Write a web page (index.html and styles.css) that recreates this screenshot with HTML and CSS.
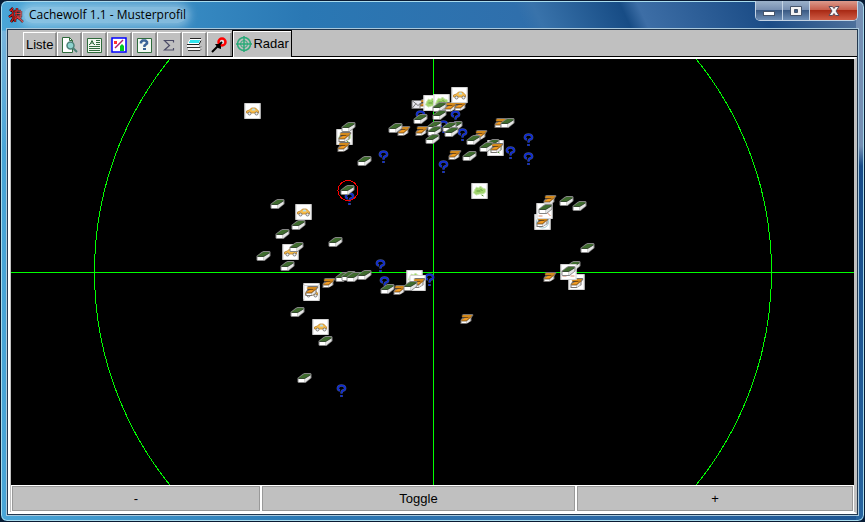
FILE: index.html
```html
<!DOCTYPE html>
<html lang="de">
<head>
<meta charset="utf-8">
<title>Cachewolf 1.1 - Musterprofil</title>
<link rel="stylesheet" href="styles.css">
</head>
<body>
<div class="window">
  <header class="titlebar">
    <svg class="app-icon" viewBox="0 0 16 16" aria-hidden="true">
      <g fill="none" stroke="#111" stroke-width="2.500"><path d="M5 1 2 4M3 2 5 5 5 12 3 15M5 7 1 10M6 4h7M9 1v3M8 4v5h5V4M7 6.500h6M7 9v6M7 12l3-2 5 5M13 10l-3 2"/></g>
      <g fill="none" stroke="#e51c1c" stroke-width="1.200"><path d="M5 1 2 4M3 2 5 5 5 12 3 15M5 7 1 10M6 4h7M9 1v3M8 4v5h5V4M7 6.500h6M7 9v6M7 12l3-2 5 5M13 10l-3 2"/></g>
    </svg>
    <h1 class="title">Cachewolf 1.1 - Musterprofil</h1>
    <div class="controls">
      <button class="control" aria-label="Minimieren"><svg viewBox="0 0 16 14"><rect x="2.500" y="7.500" width="11" height="4" fill="#fff" stroke="#46556b"/></svg></button>
      <button class="control" aria-label="Maximieren"><svg viewBox="0 0 16 14"><path d="M2.500 2.500h11v9h-11zM6.500 5.500v3h3v-3z" fill="#f4f4f4" fill-rule="evenodd" stroke="#46556b"/></svg></button>
      <button class="control close" aria-label="Schließen"><svg viewBox="0 0 16 14"><path d="M3 2.500h3.500L8 4.500l1.500-2H13L10 7l3 4.500H9.500L8 9.500l-1.500 2H3L6 7z" fill="#f6f6f6" stroke="#5a4a58"/></svg></button>
    </div>
  </header>
  <main class="panel">
    <nav class="tabs">
      <button class="tab text-tab">Liste</button>
      <button class="tab" aria-label="Details"><svg viewBox="0 0 18 18"><path d="M2.500 1.500h7l3 3v12h-10z" fill="#fff" stroke="#2f6b3c"/><path d="M9.500 1.500v3h3" fill="none" stroke="#2f6b3c"/><circle cx="10.500" cy="9.500" r="3.500" fill="#8ed3cf" stroke="#4c8178" stroke-width="1.500"/><path d="m13 12 4 4" stroke="#4c8178" stroke-width="2"/></svg></button>
      <button class="tab" aria-label="Beschreibung"><svg viewBox="0 0 18 18"><path d="M2.500 2.500h14v14h-14z" fill="#f2f8f0" stroke="#2f6b3c"/><path d="M4 8.500h1l2-4 2 4h1M6 7h2M11 4.500h4M11 6.500h4M11 8.500h4M4 10.500h11M4 12.500h11M4 14.500h11" fill="none" stroke="#2f6b3c"/></svg></button>
      <button class="tab" aria-label="Bilder"><svg viewBox="0 0 18 18"><path d="M2 2h14v14H2z" fill="#fff" stroke="#00f" stroke-width="1.500"/><path d="m5 12 8-8" stroke="#b22070" stroke-width="1.500"/><path d="M4 5h3v3H4z" fill="#f33"/><path d="M10 15v-5l2-2 2 2v5z" fill="#0c2"/></svg></button>
      <button class="tab" aria-label="Hinweise"><svg viewBox="0 0 18 18"><path d="M2.500 2.500h14v14h-14z" fill="#f4faf4" stroke="#2f6b3c"/><path d="M6 7.500V6l1.500-1.500h3L12 6v1.500L9.500 9.500V11" fill="none" stroke="#3c6698" stroke-width="2.500"/><path d="M8 12h3v2H8z" fill="#3c6698"/></svg></button>
      <button class="tab" aria-label="Solver"><svg viewBox="0 0 18 18"><path d="M13.500 6.500v-2h-9l5 5-5 4.500h9v-2" fill="none" stroke="#4c4c67" stroke-width="1.200"/></svg></button>
      <button class="tab" aria-label="Rechner"><svg viewBox="0 0 18 18"><path d="M5 3.500h11l-2 4H3z" fill="#2ee4ed" stroke="#fff"/><path d="M5 2.500h11M2 8.500h12l2-4" fill="none" stroke="#222"/><path d="M2 9h12v2H2zM3 12h12v2H3z" fill="#f6f6f6"/><path d="M2 11.500h13l1-1M3 14.500h12l1-1" fill="none" stroke="#333"/></svg></button>
      <button class="tab" aria-label="Ziel"><svg viewBox="0 0 18 18"><circle cx="12" cy="6" r="3.500" fill="#ddd" stroke="#f00" stroke-width="2.500"/><path d="m2 16 10-10" stroke="#000" stroke-width="2"/><path d="M5 8h4l2 2v3l-3-1z"/></svg></button>
      <button class="tab text-tab active"><svg viewBox="0 0 18 18"><g fill="none" stroke="#2aaa78" stroke-width="1.500"><circle cx="9" cy="9" r="6.500"/><circle cx="9" cy="9" r="3.500" stroke-width="1"/><path d="M9 1v16M1 9h16"/></g></svg><span>Radar</span></button>
    </nav>
    <section class="view">
      <svg class="radar" viewBox="11 59 844 426" preserveAspectRatio="xMidYMid slice" role="img" aria-label="Radar">
        <defs>
          <g id="t"><path d="M-7 0-2-4l2-1h6l1 1v4L1 5H-6l-1-1z" fill="#858585"/><path d="M-6 0-1-3.500l1-.5h5l1 1L0 .5z" fill="#3f6c2e"/><path d="M-6 1h6v3h-6z" fill="#fff"/><path d="M0 1 6-3v3L1 4H0z" fill="#e4e4e4"/><path d="M-6 .5h6L6-3" fill="none" stroke="#263c1f" stroke-width=".8"/></g>
          <g id="m"><path d="M-5-4-3-5H6l1 1-2 3v3L0 5h-6V1l3-4z" fill="#777370"/><path d="m-5-3 2-1h9l-2 2h-8z" fill="#d48a1c"/><path d="M-5 1 0-2h5L1 2h-6z" fill="#f09a22"/><path d="M-5 2h5v2h-5z" fill="#fff"/><path d="m0 2 4-3v3L1 4H0z" fill="#e4e4e4"/><path d="M-4-1.500h6M-5 2h5l4-4" fill="none" stroke="#4b2e0b" stroke-width=".7"/></g>
          <g id="q" fill="none"><path d="M-1.500-.5C-5-1-4-5.500 0-5.500s5 4.500 1.500 5Q0 0 0 2.500M0 4v2" stroke="#4a5878" stroke-width="2.500"/><path d="M-1.500-.5C-5-1-4-5.500 0-5.500s5 4.500 1.500 5Q0 0 0 2.500M0 4v2" stroke="#0a28d8" stroke-width="1.500"/></g>
          <g id="b"><path d="M-8-8H8V8H-8z" fill="#fff"/><path d="M-7.500-7.500h15v15h-15z" fill="none" stroke="#d4d4d4"/></g>
          <g id="c"><use href="#b"/><path d="M-6 2v-2l3-1 2-2h4l2 2 1 1v2z" fill="#f8bc48" stroke="#b9802c" stroke-width=".8"/><path d="m-1 -.5 1-2h2l1 2z" fill="#b4e0f2"/><circle cx="-3" cy="2.500" r="1.500" fill="#eee" stroke="#666" stroke-width=".8"/><circle cx="4" cy="2.500" r="1.500" fill="#eee" stroke="#666" stroke-width=".8"/></g>
          <g id="w"><use href="#b"/><path d="m-5-1 2-3 2 1 2-2 2 2 3 1v3L4 3H0l-3 1-3-2z" fill="#a0d46c" stroke="#c8e6ae"/><path d="M-3 0h4M1-2l2 2M2 4l2 1" stroke="#5c983a"/></g>
        </defs>
        <g class="lines">
          <circle cx="433.500" cy="272" r="338.500"/>
          <path d="M433.500-400v1400M-1000 272.500h3000"/>
        </g>
        <g>
          <g fill="#e8e8ee" stroke="#777"><path d="M412.500 100.500h12v8h-12z"/><path d="m412.500 100.500 6 5 6-5M412.500 108.500l4-5M424.500 108.500l-4-5" fill="none"/></g>
          <use href="#m" x="426" y="104"/>
          <use href="#q" x="421" y="117"/><use href="#q" x="456" y="117"/><use href="#q" x="444" y="127"/><use href="#q" x="463" y="135"/>
          <use href="#q" x="529" y="140"/><use href="#q" x="529" y="159"/><use href="#q" x="511" y="153"/><use href="#q" x="444" y="167"/>
          <use href="#q" x="384" y="157"/><use href="#q" x="350" y="199"/><use href="#q" x="381" y="266"/><use href="#q" x="385" y="283"/>
          <use href="#q" x="430" y="280"/><use href="#q" x="342" y="391"/>
          <use href="#c" x="253" y="111"/><use href="#c" x="304" y="212"/><use href="#c" x="291" y="252"/><use href="#c" x="321" y="327"/>
          <use href="#w" x="312" y="291"/><use href="#c" x="312" y="293"/>
          <use href="#w" x="432" y="103"/><use href="#w" x="442" y="102"/><use href="#w" x="480" y="191"/><use href="#w" x="496" y="148"/>
          <use href="#w" x="345" y="137"/><use href="#w" x="415" y="278"/><use href="#b" x="418" y="283"/>
          <use href="#m" x="451" y="107"/><use href="#m" x="461" y="106"/><use href="#c" x="460" y="95"/>
          <use href="#m" x="404" y="131"/><use href="#m" x="422" y="131"/><use href="#m" x="481" y="135"/><use href="#m" x="501" y="123"/>
          <use href="#m" x="455" y="155"/><use href="#m" x="345" y="137"/><use href="#m" x="344" y="147"/>
          <use href="#m" x="329" y="283"/><use href="#m" x="312" y="291"/><use href="#m" x="400" y="290"/><use href="#m" x="419" y="283"/>
          <use href="#m" x="467" y="319"/><use href="#m" x="550" y="200"/><use href="#m" x="550" y="277"/>
          <use href="#t" x="349" y="127"/><use href="#t" x="365" y="161"/><use href="#t" x="348" y="190"/><use href="#t" x="278" y="204"/>
          <use href="#t" x="299" y="225"/><use href="#t" x="283" y="234"/><use href="#t" x="297" y="247"/><use href="#t" x="264" y="256"/>
          <use href="#t" x="288" y="266"/><use href="#t" x="336" y="242"/><use href="#t" x="343" y="277"/><use href="#t" x="349" y="276"/>
          <use href="#t" x="354" y="277"/><use href="#t" x="365" y="275"/><use href="#t" x="388" y="289"/><use href="#t" x="298" y="312"/>
          <use href="#t" x="326" y="341"/><use href="#t" x="305" y="378"/><use href="#t" x="396" y="128"/><use href="#t" x="421" y="119"/>
          <use href="#t" x="440" y="107"/><use href="#t" x="440" y="115"/><use href="#t" x="435" y="126"/><use href="#t" x="435" y="131"/>
          <use href="#t" x="433" y="139"/><use href="#t" x="456" y="126"/><use href="#t" x="450" y="127"/><use href="#t" x="452" y="132"/>
          <use href="#t" x="474" y="140"/><use href="#t" x="470" y="156"/><use href="#t" x="508" y="123"/><use href="#t" x="493" y="144"/>
          <use href="#t" x="487" y="147"/><use href="#m" x="497" y="148"/><use href="#t" x="411" y="286"/>
          <use href="#t" x="567" y="201"/><use href="#t" x="580" y="206"/><use href="#t" x="588" y="248"/><use href="#t" x="574" y="266"/>
          <use href="#b" x="543" y="222"/><circle cx="543" cy="222" r="6" fill="none" stroke="#9fc7cf"/><use href="#m" x="543" y="222"/>
          <use href="#b" x="545" y="211"/><path d="M539 216h4M548 213l3 3" stroke="#d98a6c"/><use href="#t" x="546" y="209"/>
          <use href="#b" x="577" y="282"/><use href="#m" x="577" y="283"/>
          <use href="#b" x="569" y="272"/><path d="M563 276h4M571 276h4" stroke="#d98a6c"/><use href="#t" x="569" y="271"/>
        </g>
        <circle class="selected" cx="348.500" cy="190.500" r="10"/>
      </svg>
      <footer class="actions">
        <button>-</button><button>Toggle</button><button>+</button>
      </footer>
    </section>
  </main>
</div>
</body>
</html>
```
FILE: styles.css
```css
* {
  box-sizing: border-box;
}

body {
  margin: 0;
  background: #061c35;
  color: #000;
  font-family: "Liberation Sans", Arial, sans-serif;
  font-size: 12px;
}

button {
  margin: 0;
  padding: 0;
  border: 0;
  background: none;
  color: inherit;
  font: inherit;
}

.window {
  display: flex;
  flex-direction: column;
  height: 100vh;
  padding: 0 6px 6px;
  border: 1px solid #0b1b33;
  border-radius: 7px;
  box-shadow: inset 0 0 0 1px #a9dcee;
  background:
    linear-gradient(to bottom, transparent 29px, #78b4dc 30px, transparent 150px) left / 8px 100% no-repeat,
    linear-gradient(to bottom, #7590b4, #7590b4 145px, #174b88 165px, #28659f) right / 8px 100% no-repeat,
    linear-gradient(65deg, transparent 60%, #3973ab 62%, #174c85 72%, #3d6ea6 74%, #1b4c86 88%, #58779f 100%) top / 100% 30px no-repeat,
    linear-gradient(to right, #4aa6d8, #2a78b4 35%, #2f6fac 60%, #1d5592);
}

.titlebar {
  display: flex;
  align-items: center;
  flex: none;
  height: 28px;
  padding: 0 0 0 1px;
}

.app-icon {
  width: 16px;
  height: 16px;
}

.title {
  margin: 0 auto 0 0;
  padding: 0 0 0 5px;
  border-radius: 12px;
  background: rgba(180, 216, 236, 0.6);
  box-shadow: 0 0 8px 4px rgba(180, 216, 236, 0.6);
  font: 12px/16px "Open Sans", sans-serif;
}

.controls {
  display: flex;
  align-self: flex-start;
  height: 20px;
  overflow: hidden;
  border: 1px solid #c3d3e4;
  border-top: 0;
  border-radius: 0 0 5px 5px;
}

.control {
  display: flex;
  align-items: center;
  justify-content: center;
  width: 27px;
  border-right: 1px solid #c3d3e4;
  background: linear-gradient(#9bb1ca, #7890b2 45%, #3a5a84 50%, #6f8fb5);
}

.control svg {
  width: 16px;
  height: 14px;
}

.control.close {
  width: 47px;
  border: 0;
  background: linear-gradient(#dc9a8c, #c8604e 45%, #a92a15 50%, #cf5c45);
}

.panel {
  display: flex;
  flex: 1;
  flex-direction: column;
  min-height: 0;
  border: 1px solid #23384f;
  outline: 1px solid #a9c8dc;
  background: #c0c0c0;
}

.tabs {
  display: flex;
  align-items: flex-end;
  flex: none;
  height: 27px;
  padding-left: 15px;
  border-bottom: 1px solid #000;
}

.tab {
  display: flex;
  align-items: center;
  justify-content: center;
  width: 25px;
  height: 24px;
  border: 1px solid #fff;
  border-right: 2px solid #909090;
  border-bottom: 0;
}

.tab svg {
  flex: none;
  width: 18px;
  height: 18px;
}

.text-tab {
  width: auto;
  padding: 0 2px;
  font-size: 13px;
}

.tab.active {
  position: relative;
  height: 27px;
  margin-bottom: -1px;
  border: 1px solid #000;
  border-bottom: 0;
  background: #c0c0c0;
  box-shadow: inset 1px 1px 0 #fff;
}

.tab.active span {
  padding-bottom: 2px;
}

.view {
  display: flex;
  flex: 1;
  flex-direction: column;
  min-height: 0;
  padding: 0 1px;
  border: 2px solid #fff;
  border-right-color: #c0c0c0;
}

.radar {
  display: block;
  flex: 1;
  width: 100%;
  min-height: 0;
  background: #000;
}

.lines {
  fill: none;
  stroke: #0f0;
  stroke-width: 1;
  shape-rendering: crispEdges;
}

.selected {
  fill: none;
  stroke: #f00;
  shape-rendering: crispEdges;
}

.actions {
  display: grid;
  flex: none;
  grid-template-columns: 250fr 316fr 278fr;
  height: 27px;
}

.actions button {
  border: 1px solid #fff;
  outline: 1px solid #999;
  outline-offset: -2px;
  background: #c0c0c0;
  font-size: 13px;
}
```
